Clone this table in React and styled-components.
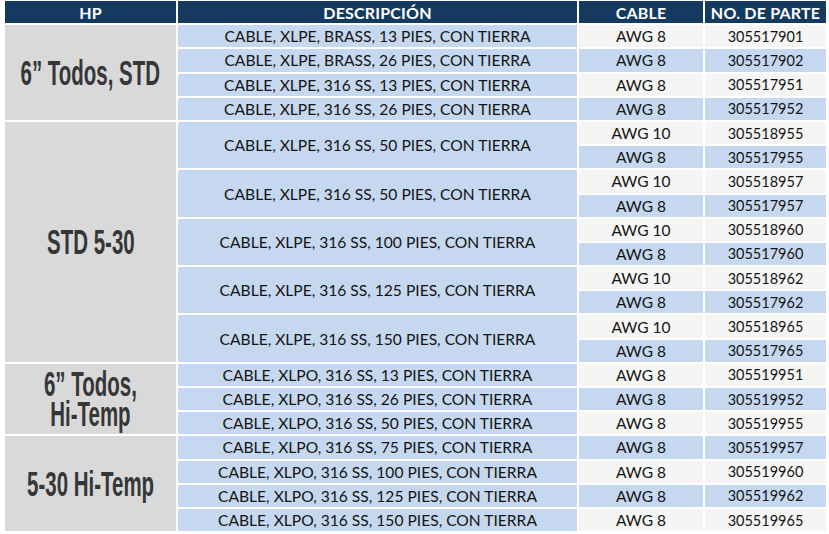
import React from 'react';
import styled, { createGlobalStyle } from 'styled-components';

const GlobalStyle = createGlobalStyle`
  html, body {
    margin: 0;
    padding: 0;
    background: #ffffff;
  }
`;

const Page = styled.div`
  padding: 1px 3px 0 5px;
`;

const Table = styled.div`
  display: grid;
  grid-template-columns: 171px 399px 124px 121px;
  grid-auto-rows: 22.2px;
  gap: 2px;
  font-family: Lato, "Open Sans", sans-serif;
  color: #141414;
`;

const HeadCell = styled.div`
  background: #143b5f;
  color: #ffffff;
  font-weight: 700;
  font-size: 16px;
  letter-spacing: 0.2px;
  display: flex;
  align-items: center;
  justify-content: center;
  grid-row: 1;
`;

const Cell = styled.div`
  display: flex;
  align-items: center;
  justify-content: center;
  grid-column: ${p => p.$col};
  grid-row: ${p => p.$row} / span ${p => p.$span || 1};
  background: ${p => (p.$tone === 'light' ? '#f5f5f3' : '#c6d8ef')};
  font-size: ${p => p.$size || 15}px;
  white-space: nowrap;
`;

const HpCell = styled(Cell)`
  background: #d9d9da;
  text-align: center;
`;

const HpLabel = styled.span`
  display: inline-block;
  font-family: "Liberation Sans Narrow", "Liberation Sans", sans-serif;
  font-weight: 700;
  font-size: 35px;
  line-height: 30px;
  color: #363636;
  transform: scaleX(0.585);
`;

const groups = [
  {
    hp: ['6” Todos, STD'],
    items: [
      { desc: 'CABLE, XLPE, BRASS, 13 PIES, CON TIERRA', parts: [['AWG 8', '305517901']] },
      { desc: 'CABLE, XLPE, BRASS, 26 PIES, CON TIERRA', parts: [['AWG 8', '305517902']] },
      { desc: 'CABLE, XLPE, 316 SS, 13 PIES, CON TIERRA', parts: [['AWG 8', '305517951']] },
      { desc: 'CABLE, XLPE, 316 SS, 26 PIES, CON TIERRA', parts: [['AWG 8', '305517952']] },
    ],
  },
  {
    hp: ['STD 5-30'],
    items: [
      { desc: 'CABLE, XLPE, 316 SS, 50 PIES, CON TIERRA', parts: [['AWG 10', '305518955'], ['AWG 8', '305517955']] },
      { desc: 'CABLE, XLPE, 316 SS, 50 PIES, CON TIERRA', parts: [['AWG 10', '305518957'], ['AWG 8', '305517957']] },
      { desc: 'CABLE, XLPE, 316 SS, 100 PIES, CON TIERRA', parts: [['AWG 10', '305518960'], ['AWG 8', '305517960']] },
      { desc: 'CABLE, XLPE, 316 SS, 125 PIES, CON TIERRA', parts: [['AWG 10', '305518962'], ['AWG 8', '305517962']] },
      { desc: 'CABLE, XLPE, 316 SS, 150 PIES, CON TIERRA', parts: [['AWG 10', '305518965'], ['AWG 8', '305517965']] },
    ],
  },
  {
    hp: ['6” Todos,', 'Hi-Temp'],
    items: [
      { desc: 'CABLE, XLPO, 316 SS, 13 PIES, CON TIERRA', parts: [['AWG 8', '305519951']] },
      { desc: 'CABLE, XLPO, 316 SS, 26 PIES, CON TIERRA', parts: [['AWG 8', '305519952']] },
      { desc: 'CABLE, XLPO, 316 SS, 50 PIES, CON TIERRA', parts: [['AWG 8', '305519955']] },
    ],
  },
  {
    hp: ['5-30 Hi-Temp'],
    items: [
      { desc: 'CABLE, XLPO, 316 SS, 75 PIES, CON TIERRA', parts: [['AWG 8', '305519957']] },
      { desc: 'CABLE, XLPO, 316 SS, 100 PIES, CON TIERRA', parts: [['AWG 8', '305519960']] },
      { desc: 'CABLE, XLPO, 316 SS, 125 PIES, CON TIERRA', parts: [['AWG 8', '305519962']] },
      { desc: 'CABLE, XLPO, 316 SS, 150 PIES, CON TIERRA', parts: [['AWG 8', '305519965']] },
    ],
  },
];

function buildCells() {
  const cells = [];
  let row = 2;
  groups.forEach((g, gi) => {
    const total = g.items.reduce((n, it) => n + it.parts.length, 0);
    cells.push(
      <HpCell key={`hp${gi}`} $col={1} $row={row} $span={total}>
        <HpLabel>
          {g.hp.map((line, i) => (
            <React.Fragment key={i}>
              {i > 0 && <br />}
              {line}
            </React.Fragment>
          ))}
        </HpLabel>
      </HpCell>
    );
    g.items.forEach((it, ii) => {
      cells.push(
        <Cell key={`d${gi}-${ii}`} $col={2} $row={row} $span={it.parts.length} $size={15.6}>
          {it.desc}
        </Cell>
      );
      it.parts.forEach(([cable, part], pi) => {
        const tone = (row - 2) % 2 === 0 ? 'light' : 'blue';
        cells.push(
          <Cell key={`c${gi}-${ii}-${pi}`} $col={3} $row={row} $tone={tone} $size={15.5}>{cable}</Cell>,
          <Cell key={`p${gi}-${ii}-${pi}`} $col={4} $row={row} $tone={tone} $size={14.5}>{part}</Cell>
        );
        row += 1;
      });
    });
  });
  return cells;
}

export default function App() {
  return (
    <Page>
      <GlobalStyle />
      <Table>
        <HeadCell>HP</HeadCell>
        <HeadCell>DESCRIPCIÓN</HeadCell>
        <HeadCell>CABLE</HeadCell>
        <HeadCell>NO. DE PARTE</HeadCell>
        {buildCells()}
      </Table>
    </Page>
  );
}
